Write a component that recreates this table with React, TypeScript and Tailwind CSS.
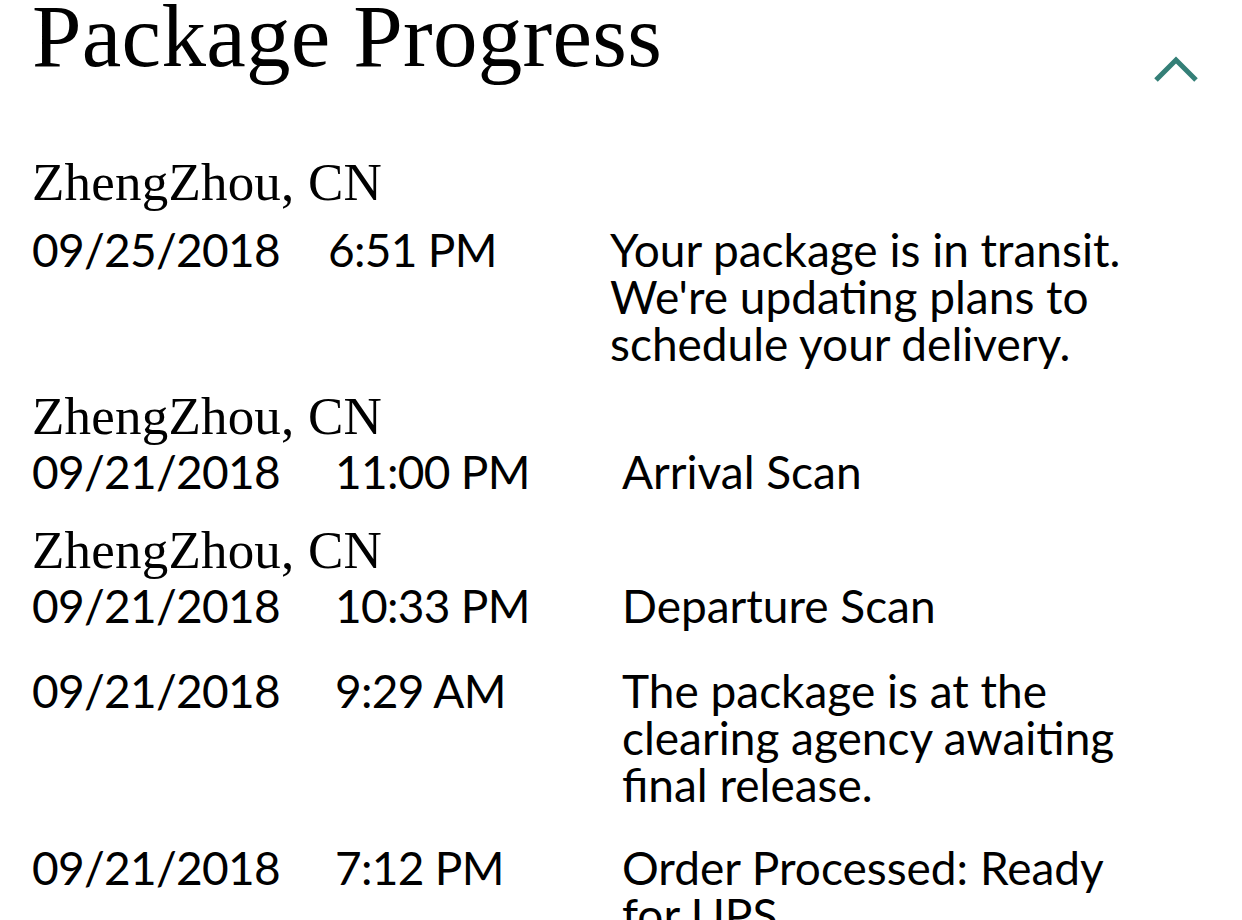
import React from 'react';

const serif = { fontFamily: '"Liberation Serif", "Times New Roman", serif' };

type Scan = {
  location?: string;
  date: string;
  time: string;
  lines: string[];
  first?: boolean;
};

const scans: Scan[] = [
  {
    location: 'ZhengZhou, CN',
    date: '09/25/2018',
    time: '6:51 PM',
    lines: ['Your package is in transit.', "We're updating plans to", 'schedule your delivery.'],
    first: true,
  },
  { location: 'ZhengZhou, CN', date: '09/21/2018', time: '11:00 PM', lines: ['Arrival Scan'] },
  { location: 'ZhengZhou, CN', date: '09/21/2018', time: '10:33 PM', lines: ['Departure Scan'] },
  {
    date: '09/21/2018',
    time: '9:29 AM',
    lines: ['The package is at the', 'clearing agency awaiting', 'final release.'],
  },
  { date: '09/21/2018', time: '7:12 PM', lines: ['Order Processed: Ready', 'for UPS'] },
];

// gap above each block, in px, read off the screenshot
const blockGaps = ['mt-[67px]', 'mt-[17px]', 'mt-[23px]', 'mt-[38px]', 'mt-[36px]'];

const ChevronUp = () => (
  <svg width="46" height="28" viewBox="0 0 46 28" fill="none">
    <polyline points="3,25 23,5 43,25" stroke="#347f77" strokeWidth="5" strokeLinejoin="miter" />
  </svg>
);

export default function App() {
  return (
    <div className="w-[1242px] h-[920px] overflow-hidden bg-white text-black">
      <div className="pl-[32px] pr-[43px]">
        {/* Header */}
        <div className="flex items-start justify-between -mt-[8px]">
          <h1 className="text-[89px] leading-[89px] font-normal tracking-[0.3px]" style={serif}>
            Package Progress
          </h1>
          <div className="mt-[63px]">
            <ChevronUp />
          </div>
        </div>

        {/* Scan history */}
        {scans.map((s, i) => (
          <div key={i} className={blockGaps[i]}>
            {s.location && (
              <div className="text-[53px] leading-[64px] tracking-[0.2px]" style={serif}>
                {s.location}
              </div>
            )}
            <div
              className={`flex text-[46px] leading-[47px] font-['Lato',sans-serif] ${s.first ? 'mt-[12px]' : ''}`}
            >
              <span
                className={`tracking-[-0.7px] shrink-0 ${s.first ? 'w-[296px]' : 'w-[303px]'}`}
              >
                {s.date}
              </span>
              <span
                className={`tracking-[-0.7px] shrink-0 ${s.first ? 'w-[282px]' : 'w-[287px]'}`}
              >
                {s.time}
              </span>
              <div className="flex flex-col">
                {s.lines.map((l) => (
                  <span key={l}>{l}</span>
                ))}
              </div>
            </div>
          </div>
        ))}
      </div>
    </div>
  );
}
